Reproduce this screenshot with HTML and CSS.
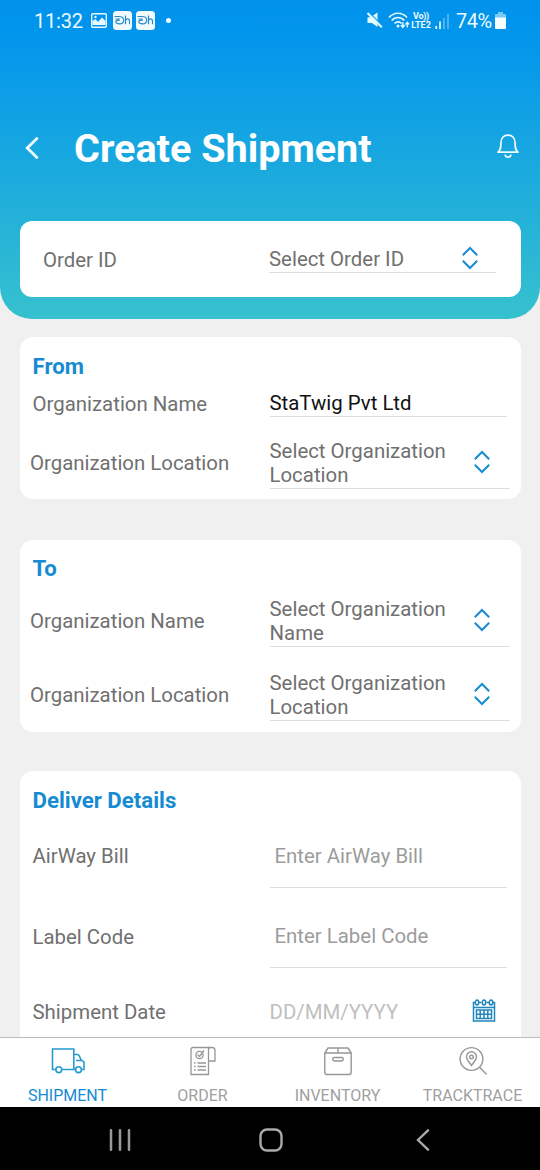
FILE: index.html
```html
<!DOCTYPE html>
<html lang="en">
<head>
<meta charset="utf-8">
<title>Create Shipment</title>
<link rel="stylesheet" href="styles.css">
</head>
<body>
<svg class="defs" width="0" height="0">
  <symbol id="sort" viewBox="0 0 18 24"><path d="M1.800 9.200 9 2l7.200 7.200M1.800 14.800 9 22l7.200-7.200" fill="none" stroke="#168bd2" stroke-width="2"/></symbol>
  <symbol id="app" viewBox="0 0 19 19"><rect width="19" height="19" rx="3.500" fill="#f1fbff"/><path d="M1.500 5.500h4.200c3.500 0 5 1.700 5 3.700s-1.700 3.700-4.200 3.700c-2.300 0-3.700-.8-3.700-2 0-1.300 1.500-1.800 4-1.800M2.500 8h4M12.500 4.500v8.700M12.500 9.500c.6-2.300 4-2.300 4 .3v3.400" fill="none" stroke="#2687c8" stroke-width="1.150"/></symbol>
</svg>
<div class="screen">
  <header class="hero">
    <div class="status">
      <span class="clock">11:32</span>
      <svg class="s-pic" width="16" height="15" viewBox="0 0 16 15"><rect x=".7" y=".7" width="14.600" height="13.600" rx="1" fill="none" stroke="#eaf9ff" stroke-width="1.400"/><path d="M1.500 12V8l3-2 2.500 3 4-4.500L14.500 8v4z" fill="#eaf9ff"/><circle cx="4.500" cy="4" r="1.200" fill="#eaf9ff"/></svg>
      <svg class="s-app" width="19" height="19"><use href="#app"/></svg>
      <svg class="s-app2" width="19" height="19"><use href="#app"/></svg>
      <span class="dot"></span>
      <span class="grow"></span>
      <svg class="s-mute" width="16" height="17" viewBox="0 0 16 17"><path d="M.5 5.500 4 5l6.500-4.500V15L5 11H.5z" fill="#e6fbff"/><path d="M2 .5 16 14.500" stroke="#0796e9" stroke-width="1.300"/><path d="M.5 1 14.800 15.300" stroke="#e6fbff" stroke-width="2"/></svg>
      <svg class="s-wifi" width="22" height="17" viewBox="0 0 22 17"><path d="M1 5.500C6-.2 14-.2 19 5.500M3.700 8.500c3.600-4 9-4 12.600 0M6.500 11.500c2.200-2.300 4.800-2.300 7 0" fill="none" stroke="#e6fbff" stroke-width="1.700"/><circle cx="10" cy="14" r="1.500" fill="#e6fbff"/><path d="M14.800 10v5M12.800 13l2 2.500 2-2.500M19.300 15.500v-5M17.500 12.500l1.800-2.300 1.800 2.300" fill="none" stroke="#e6fbff" stroke-width="1.300"/></svg>
      <span class="volte"><span class="vo">Vo))</span><span>LTE2</span></span>
      <svg class="s-signal" width="14" height="15" viewBox="0 0 14 15"><path d="M1.200 15v-3M5 15V7.500" stroke="#e6fbff" stroke-width="1.700"/><path d="M9 15V4M13 15V0" stroke="#64bdf0" stroke-width="1.500"/></svg>
      <span class="percent">74%</span>
      <svg class="s-batt" width="11" height="17" viewBox="0 0 11 17"><path d="M3 0h5v2h2q1 0 1 1v3H0V3q0-1 1-1h2z" fill="#7accf7"/><path d="M0 5.500h11V16q0 1-1 1H1q-1 0-1-1z" fill="#f4fdff"/></svg>
    </div>
    <div class="titlebar">
      <svg class="back" width="14" height="24" viewBox="0 0 14 24"><path d="M12.700 1.700 2.200 12l10.500 10.300" fill="none" stroke="#effcff" stroke-width="2.800"/></svg>
      <h1 class="title">Create Shipment</h1>
      <svg class="bell" width="22" height="25" viewBox="0 0 22 25"><path d="M1 18.200c2.700-2.200 2.900-4.300 2.900-9.200C3.900 4.300 6.600 1.200 11 1.200S18.100 4.300 18.100 9c0 4.900.2 7 2.900 9.200zM8 20.700c.6 3.300 5.400 3.300 6 0" fill="none" stroke="#f2fcff" stroke-width="1.700" stroke-linejoin="round"/></svg>
    </div>
    <section class="order-card">
      <span class="order-label">Order ID</span>
      <div class="order-field"><span>Select Order ID</span><svg class="sort" width="18" height="24"><use href="#sort"/></svg></div>
    </section>
  </header>
  <main class="content">
    <section class="card from">
      <h2 class="heading">From</h2>
      <div class="row"><span class="label">Organization Name</span><span class="value">StaTwig Pvt Ltd</span></div>
      <div class="row select-row"><span class="label">Organization Location</span><div class="select"><span class="choice">Select Organization Location</span><svg class="sort" width="18" height="24"><use href="#sort"/></svg></div></div>
    </section>
    <section class="card to">
      <h2 class="heading">To</h2>
      <div class="row select-row first"><span class="label">Organization Name</span><div class="select"><span class="choice">Select Organization Name</span><svg class="sort" width="18" height="24"><use href="#sort"/></svg></div></div>
      <div class="row select-row second"><span class="label">Organization Location</span><div class="select"><span class="choice">Select Organization Location</span><svg class="sort" width="18" height="24"><use href="#sort"/></svg></div></div>
    </section>
    <section class="card deliver">
      <h2 class="heading">Deliver Details</h2>
      <div class="row input-row airway"><span class="label">AirWay Bill</span><span class="input">Enter AirWay Bill</span></div>
      <div class="row input-row code"><span class="label">Label Code</span><span class="input">Enter Label Code</span></div>
      <div class="row date-row"><span class="label">Shipment Date</span><span class="date">DD/MM/YYYY</span>
        <svg class="calendar" width="24" height="24" viewBox="0 0 24 24"><g fill="none" stroke="#2084bd" stroke-width="1.500"><path d="M3 3.500H1.500V22h21V3.500H21M7 3.500h2.500M14.500 3.500H17M1.500 8.500h21"/><ellipse cx="5" cy="3.600" rx="1.700" ry="2.500"/><ellipse cx="12" cy="3.600" rx="1.700" ry="2.500"/><ellipse cx="19" cy="3.600" rx="1.700" ry="2.500"/><path d="M4.500 11h15v8.500h-15zM4.500 15.200h15M8.200 11v8.500M12 11v8.500M15.800 11v8.500"/></g></svg>
      </div>
    </section>
  </main>
  <nav class="tabs">
    <a class="tab active"><svg width="34" height="30" viewBox="0 0 34 30"><g fill="none" stroke="#259bce" stroke-width="1.600"><path d="M4.500 23.500H1.500V3h21.300v20.500H11M22.800 8.500h3.700c2 0 2.600 3.600 3.600 5.500l2.900 2.200v7.300h-2.400M22.800 23.500h1.700M25 14.500h5"/><circle cx="7.800" cy="23.700" r="2.900"/><circle cx="27.500" cy="23.700" r="2.900"/></g></svg><span>SHIPMENT</span></a>
    <a class="tab"><svg width="28" height="30" viewBox="0 0 28 30"><g fill="none" stroke="#979797" stroke-width="1.300"><path d="M23 1.500H4q-2 0-2 2v25h17.500V3.500q0-2 2.500-2h1q3 0 3 3V15h-6.500"/><circle cx="10.500" cy="9" r="3.600"/><path d="m8.500 8.500 2 2L15 4.500M5 17h1.500M8.500 17H17M5 20.500h1.500M8.500 20.500H17M5 24h1.500M8.500 24H17"/></g></svg><span>ORDER</span></a>
    <a class="tab"><svg width="30" height="30" viewBox="0 0 30 30"><g fill="none" stroke="#979797" stroke-width="1.400" stroke-linejoin="round"><path d="M1.800 7h26.400v19q0 2.500-2 2.500H3.800q-2 0-2-2.500zL5 2h20l3.200 5M15 2v5"/><rect x="9.700" y="11.500" width="10.600" height="3.500" rx="1.750"/></g></svg><span>INVENTORY</span></a>
    <a class="tab"><svg width="30" height="30" viewBox="0 0 30 30"><g fill="none" stroke="#979797" stroke-width="1.400"><circle cx="13.500" cy="13" r="11.400"/><path d="m21.500 21 7 7.500M13.500 19.500C11 16 8.500 13.500 8.500 10.800a5 5 0 0 1 10 0c0 2.700-2.500 5.200-5 8.700z"/><circle cx="13.500" cy="11" r="1.800"/></g></svg><span>TRACKTRACE</span></a>
  </nav>
  <footer class="system">
    <svg width="22" height="22" viewBox="0 0 22 22"><path d="M2 1.200v19.600M11 1.200v19.600M20 1.200v19.600" stroke="#999" stroke-width="2.500" stroke-linecap="round"/></svg>
    <svg class="home" width="24" height="24" viewBox="0 0 24 24"><rect x="1.500" y="1.500" width="21" height="21" rx="6.500" fill="none" stroke="#aaa" stroke-width="2.400"/></svg>
    <svg width="14" height="22" viewBox="0 0 14 22"><path d="M12 1.300 2 11l10 9.700" fill="none" stroke="#aaa" stroke-width="2.400" stroke-linecap="round"/></svg>
  </footer>
</div>
</body>
</html>
```
FILE: styles.css
```css
* { box-sizing: border-box; }
body { margin: 0; background: #f0f0f0; font-family: Roboto, sans-serif; font-size: 20.400px; line-height: 24px; color: #707070; }
svg { display: block; flex: none; }
.defs { position: absolute; }
.screen { width: 540px; height: 1170px; display: flex; flex-direction: column; overflow: hidden; }

.hero { flex: none; height: 319px; border-radius: 0 0 32px 32px; background: linear-gradient(180deg, #0092ec 0%, #0396ec 13%, #36c1ce 100%); }
.status { height: 42px; padding: 0 34px; display: flex; align-items: center; font-size: 20px; color: #ecfaff; }
.clock { width: 50px; letter-spacing: -.2px; white-space: nowrap; }
.s-pic { margin-left: 7px; margin-top: -2px; }
.s-app { margin-left: 6px; margin-top: -1px; }
.s-app2 { margin-left: 4px; margin-top: -1px; }
.dot { width: 5px; height: 5px; margin: -2px 0 0 11px; border-radius: 50%; background: #e6fbff; }
.grow { flex: 1; }
.s-mute { margin-top: -1px; }
.s-wifi { margin-left: 5px; margin-top: -1px; }
.volte { width: 22px; margin-left: 0; margin-top: -1px; display: flex; flex-direction: column; align-items: center; font-size: 9px; line-height: 9px; font-weight: 700; }
.vo { letter-spacing: -.3px; }
.s-signal { margin-left: 3px; }
.percent { width: 36px; margin-left: 7px; letter-spacing: -.5px; }
.s-batt { margin-left: 3px; margin-top: -1px; }
.titlebar { height: 179px; padding: 0 21px 0 25px; display: flex; align-items: center; color: #fff; }
.back { margin-top: 32px; }
.title { flex: 1; margin: 34px 0 0 35px; font-size: 39.600px; line-height: 48px; font-weight: 700; }
.bell { margin-top: 30px; }
.order-card { height: 76px; margin: 0 19.500px; padding: 26px 24.500px 0 23.500px; display: flex; border-radius: 12px; background: #fff; }
.order-label { width: 226px; padding-top: 1px; }
.order-field { flex: 1; height: 26px; padding-right: 17px; display: flex; justify-content: space-between; border-bottom: 1px solid #dedede; }
.order-field .sort { margin-top: -1px; }

.content { flex: 1; min-height: 0; padding: 18px 19.500px 0; overflow: hidden; }
.card { border-radius: 13px; background: #fff; padding: 15px 14px 0 13px; }
.heading { margin: 0; font-size: 22.200px; line-height: 28px; font-weight: 700; color: #168bd2; }
.row { display: flex; }
.label { flex: none; width: 237px; white-space: nowrap; }
.value { flex: 1; height: 26px; margin-top: -1px; color: #111; border-bottom: 1px solid #dedede; }
.select-row { height: 50px; margin: 25px -3px 0 -2.500px; align-items: center; }
.select-row .label { width: 239.500px; margin-top: -2px; }
.select { flex: 1; height: 50px; padding-right: 19px; display: flex; align-items: center; justify-content: space-between; border-bottom: 1px solid #dedede; }
.choice { width: 180px; margin-top: -1px; }
.select .sort { margin-top: -4px; }
.from { height: 162px; }
.from .heading + .row { height: 22px; margin-top: 12px; }
.to { height: 192px; margin-top: 41px; padding-top: 14px; }
.to .first { margin-top: 15px; }
.to .second { margin-top: 24px; }
.deliver { height: 300px; margin-top: 39px; }
.input-row .input { flex: 1; padding-left: 5px; color: #9c9c9c; border-bottom: 1px solid #dedede; }
.airway { height: 44px; margin-top: 30px; }
.code { height: 43px; margin-top: 37px; }
.code .input { margin-top: -1px; }
.date-row { height: 26px; margin-top: 32px; }
.date { flex: 1; color: #bfbfbf; }
.calendar { margin-right: 11px; margin-top: -1px; }

.tabs { flex: none; height: 70px; display: grid; grid-template-columns: repeat(4, 1fr); border-top: 1px solid #bcbcbc; background: #fff; }
.tab { padding-top: 8px; display: flex; flex-direction: column; align-items: center; color: #a0a0a0; font-size: 16px; line-height: 20px; }
.tab span { margin-top: 10px; }
.tab.active { color: #168bd2; }
.system { flex: none; height: 63px; padding: 3px 110px 0 109px; display: flex; align-items: center; justify-content: space-between; background: #000; }
.home { margin-right: 6px; }
```
